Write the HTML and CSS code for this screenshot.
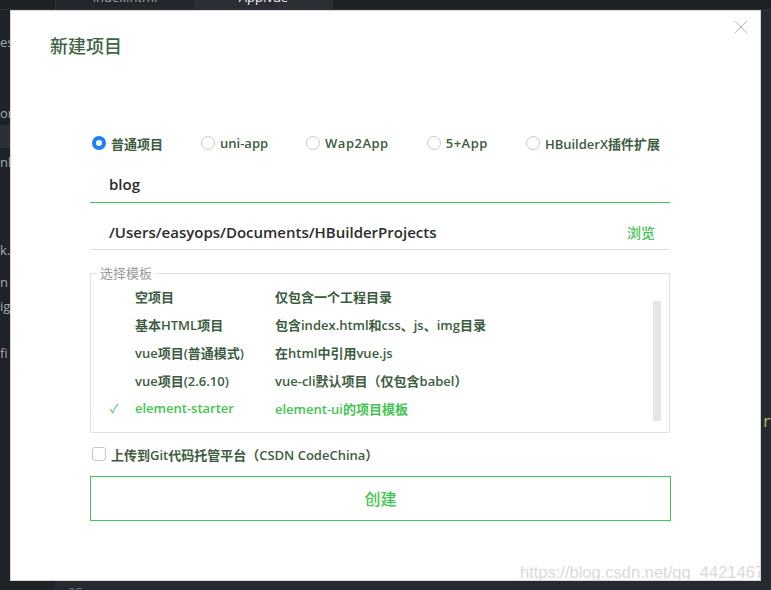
FILE: index.html
```html
<!DOCTYPE html>
<html lang="zh-CN">
<head>
  <meta charset="UTF-8">
  <meta name="viewport" content="width=device-width, initial-scale=1">
  <title>新建项目</title>
  <link rel="stylesheet" href="styles.css">
</head>
<body>
  <div class="editor">
    <div class="tabs">
      <div class="tab-gap"></div>
      <div class="tab">index.html</div>
      <div class="tab ativo">App.vue</div>
    </div>
    <div class="area">
      <ul class="arvore">
        <li class="l-es">es</li>
        <li class="l-on">on</li>
        <li class="l-sel"></li>
        <li class="l-nl">nl</li>
        <li class="l-k">k.</li>
        <li class="l-n">n</li>
        <li class="l-ig">ig</li>
        <li class="l-fi">fi</li>
      </ul>
      <div class="codigo">
        <div class="linha-r">r</div>
        <div class="num">25</div>
      </div>
    </div>
  </div>

  <div class="dialogo">
    <button class="fechar" aria-label="fechar">
      <svg width="14" height="14" viewBox="0 0 14 14"><path d="M1 1 L13 13 M13 1 L1 13" stroke="#b9b9b9" stroke-width="1" fill="none"/></svg>
    </button>
    <h2 class="titulo">新建项目</h2>

    <div class="corpo">
      <div class="tipos">
        <label class="tipo"><span class="radio marcado"></span>普通项目</label>
        <label class="tipo"><span class="radio"></span>uni-app</label>
        <label class="tipo latin"><span class="radio"></span>Wap2App</label>
        <label class="tipo latin"><span class="radio"></span>5+App</label>
        <label class="tipo"><span class="radio"></span>HBuilderX插件扩展</label>
      </div>

      <div class="campo nome">blog</div>
      <div class="campo caminho">
        <span>/Users/easyops/Documents/HBuilderProjects</span>
        <span class="navegar">浏览</span>
      </div>

      <fieldset class="modelos">
        <legend>选择模板</legend>
        <div class="lista-wrap">
          <div class="lista">
            <div class="item"><span class="check"></span><span class="nome-m">空项目</span><span>仅包含一个工程目录</span></div>
            <div class="item"><span class="check"></span><span class="nome-m">基本HTML项目</span><span>包含index.html和css、js、img目录</span></div>
            <div class="item"><span class="check"></span><span class="nome-m">vue项目(普通模式)</span><span>在html中引用vue.js</span></div>
            <div class="item"><span class="check"></span><span class="nome-m">vue项目(2.6.10)</span><span>vue-cli默认项目（仅包含babel）</span></div>
            <div class="item selecionado"><span class="check">✓</span><span class="nome-m">element-starter</span><span>element-ui的项目模板</span></div>
          </div>
          <div class="barra"></div>
        </div>
      </fieldset>

      <label class="git"><span class="caixa"></span>上传到Git代码托管平台（CSDN CodeChina）</label>

      <div class="criar" role="button">创建</div>
    </div>

    <div class="marca">https://blog.csdn.net/qq_44214671</div>
  </div>
</body>
</html>
```

FILE: styles.css
```css
:root {
  --fundo: #21242a;
  --verde: #43c553;
  --texto: #3d5b41;
  --azul: #1f7ff5;
}
* {
  box-sizing: border-box;
}
body {
  margin: 0;
  background: var(--fundo);
  font-family: "Open Sans", "Noto Sans CJK SC", sans-serif;
  overflow: hidden;
}
.editor {
  width: 771px;
  height: 590px;
  display: flex;
  flex-direction: column;
}
.tabs {
  display: flex;
  height: 26px;
  margin-top: -16px;
  background: #1d2025;
  border-bottom: 1px solid #2e3138;
}
.tab-gap {
  width: 55px;
}
.tab {
  width: 139px;
  text-align: center;
  line-height: 26px;
  font-size: 13px;
  color: #9aa0a8;
  background: #23262c;
  border-left: 1px solid #2f323a;
}
.tab.ativo {
  color: #f2f2f2;
  background: #2b2e35;
  border-right: 1px solid #2f323a;
}
.area {
  flex: 1;
  display: flex;
}
.arvore {
  list-style: none;
  margin: 0;
  padding: 0;
  width: 55px;
  background: #1f2227;
  font-size: 13px;
  color: #a3a8af;
}
.arvore li {
  height: 24px;
  line-height: 24px;
}
.l-es { margin-top: 20px; }
.l-on { margin-top: 47px; }
.l-sel { background: #2c2f36; height: 23px !important; }
.l-nl { margin-top: 2px; }
.l-k { margin-top: 64px; }
.l-n { margin-top: 8px; }
.l-fi { margin-top: 23px; }
.codigo {
  flex: 1;
  display: flex;
  flex-direction: column;
  background: #262930;
}
.linha-r {
  margin-top: 402px;
  padding-left: 707px;
  font-family: "DejaVu Sans Mono", monospace;
  font-size: 15px;
  line-height: 20px;
  color: #9fbf6e;
}
.num {
  margin-top: 151px;
  padding-left: 13px;
  font-size: 13px;
  color: #6b7079;
}

.dialogo {
  position: absolute;
  left: 10px;
  top: 10px;
  width: 751px;
  height: 571px;
  background: #fff;
  border: 1px solid #d6d6d6;
  padding: 22px 40px 0 39px;
  overflow: hidden;
}
.fechar {
  position: absolute;
  top: 9px;
  right: 12px;
  border: none;
  background: none;
  padding: 0;
  cursor: pointer;
}
.fechar svg {
  display: block;
}
.titulo {
  margin: 0;
  font-family: "Noto Sans CJK SC", sans-serif;
  font-size: 18px;
  font-weight: 500;
  line-height: 24px;
  color: #3f6344;
}
.corpo {
  margin: 76px 0 0 40px;
  width: 580px;
}
.tipos {
  display: flex;
  gap: 38px;
  padding-left: 2px;
  height: 20px;
}
.tipo {
  display: flex;
  align-items: center;
  gap: 5px;
  font-size: 13px;
  font-weight: 600;
  color: var(--texto);
}
.tipo.latin {
  letter-spacing: 0.5px;
}
.radio {
  width: 14px;
  height: 14px;
  border-radius: 50%;
  border: 1px solid #c9c9c9;
  background: #fff;
}
.radio.marcado {
  border: 4px solid var(--azul);
}
.campo {
  font-size: 15px;
  font-weight: 600;
  color: #2c2c2c;
  padding-left: 19px;
}
.nome {
  margin-top: 13px;
  height: 37px;
  line-height: 36px;
  border-bottom: 1px solid var(--verde);
}
.caminho {
  display: flex;
  justify-content: space-between;
  padding: 12px 15px 0 19px;
  height: 47px;
  line-height: 34px;
  border-bottom: 1px solid #dedede;
}
.navegar {
  font-family: "Noto Sans CJK SC", sans-serif;
  font-size: 14px;
  font-weight: 500;
  color: var(--verde);
}
.modelos {
  margin: 14px 0 0;
  padding: 0 0 10px;
  border: 1px solid #e1e1e1;
  width: 580px;
  min-width: 0;
}
.modelos legend {
  margin-left: 6px;
  padding: 0 3px;
  font-size: 13px;
  line-height: 18px;
  color: #9a9a9a;
  font-family: "Noto Sans CJK SC", sans-serif;
}
.lista-wrap {
  display: flex;
  justify-content: space-between;
}
.lista {
  padding-left: 19px;
}
.item {
  display: flex;
  height: 28px;
  align-items: center;
  font-size: 13px;
  font-weight: 600;
  color: var(--texto);
}
.check {
  width: 25px;
  color: var(--verde);
  font-size: 12px;
  font-weight: 400;
}
.nome-m {
  width: 140px;
}
.item.selecionado {
  color: var(--verde);
}
.barra {
  width: 8px;
  height: 120px;
  margin: 19px 8px 0 0;
  background: #e6e6e6;
}
.git {
  display: flex;
  align-items: center;
  gap: 5px;
  margin-top: 11px;
  padding-left: 2px;
  height: 20px;
  font-size: 13px;
  font-weight: 600;
  color: var(--texto);
}
.caixa {
  width: 14px;
  height: 14px;
  border: 1px solid #c6c6c6;
  border-radius: 3px;
}
.criar {
  width: 581px;
  height: 45px;
  margin-top: 12px;
  border: 1px solid #43c553;
  text-align: center;
  line-height: 43px;
  color: var(--verde);
  font-family: "Noto Sans CJK SC", sans-serif;
  font-size: 16px;
  font-weight: 500;
  cursor: pointer;
}
.marca {
  position: absolute;
  left: 509px;
  top: 552px;
  font-family: "Liberation Sans", Arial, sans-serif;
  font-size: 16.5px;
  color: #dadada;
  white-space: nowrap;
}
```
